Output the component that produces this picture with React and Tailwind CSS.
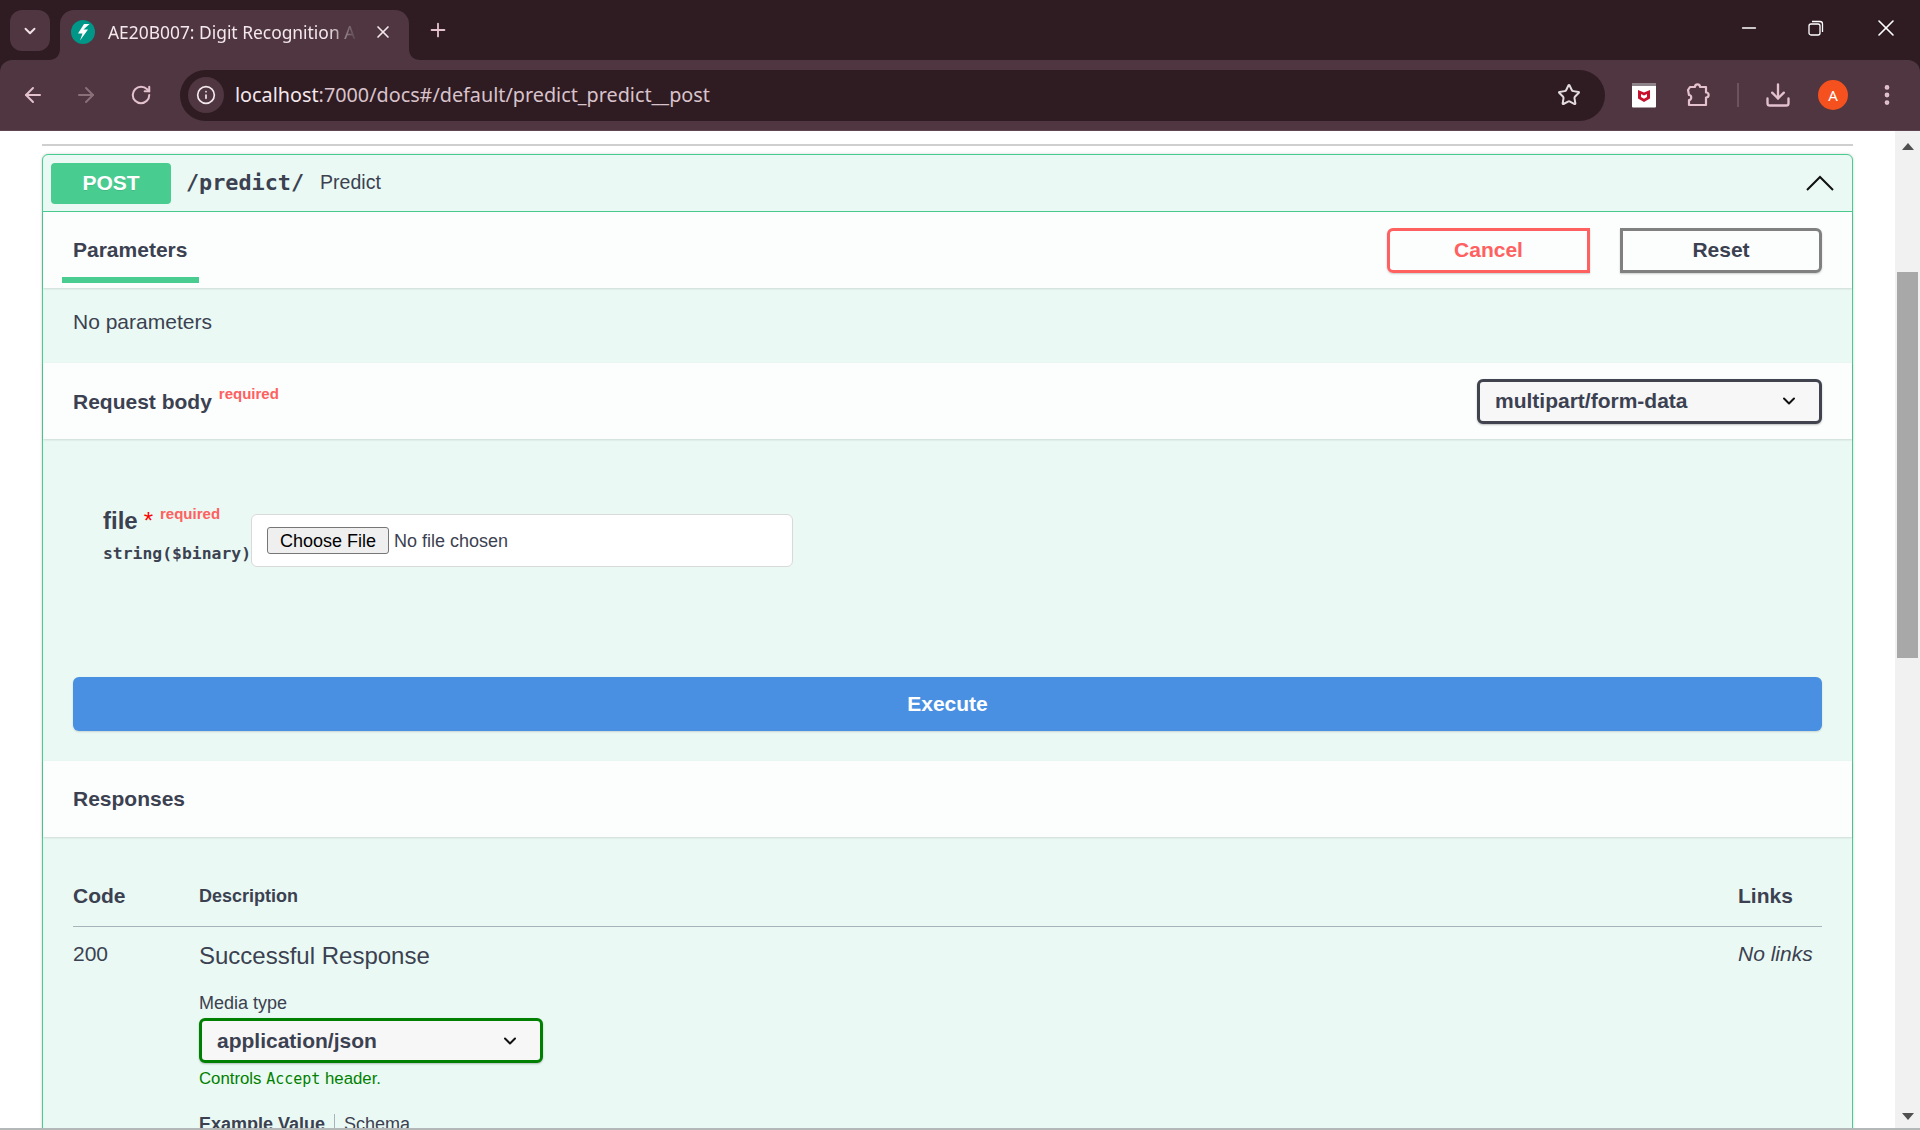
import { ArrowLeft, ArrowRight, ChevronDown, Download, EllipsisVertical, Info, Minus, Plus, RotateCw, Star, X } from 'lucide-react';

const sans = "font-['Liberation_Sans',Arial,sans-serif]";
const mono = "font-['DejaVu_Sans_Mono',monospace]";

function FastApiIcon() {
  return (
    <svg width="24" height="24" viewBox="0 0 24 24">
      <circle cx="12" cy="12" r="12" fill="#009688" />
      <path d="M13 4 L7 13.5 H11.5 L9 20.5 L17 9.5 H12.5 L18.5 4 Z" fill="#fff" />
    </svg>
  );
}

function McAfeeIcon() {
  return (
    <svg width="24" height="25" viewBox="0 0 24 25">
      <rect x="0" y="0" width="24" height="24.5" rx="1" fill="#fff" />
      <rect x="0" y="0" width="24" height="3" fill="#8d8388" />
      <path d="M6 7 L12 9.5 L18 7 V15.5 L12 19 L6 15.5 Z M9 11 V14 L12 15.8 L15 14 V11 L12 12.5 Z" fill="#c8102e" fillRule="evenodd" />
    </svg>
  );
}

function PuzzleIcon() {
  return (
    <svg width="26" height="26" viewBox="0 0 26 26" fill="none" stroke="#e3c1cd" strokeWidth="2.2" strokeLinejoin="round">
      <path d="M5 5 H10 C10 1.5 15 1.5 15 5 H21 V10.5 C24.5 10.5 24.5 15.5 21 15.5 V23 H4 V18 C7 18 7 13 4 13 L3 8 Z" />
    </svg>
  );
}

function RestoreIcon() {
  return (
    <svg width="16" height="16" viewBox="0 0 16 16" fill="none" stroke="#fff" strokeWidth="1.3">
      <rect x="1" y="4" width="11" height="11" rx="2" />
      <path d="M4 1.5 H12 Q14.5 1.5 14.5 4 V12" />
    </svg>
  );
}

function BrowserChrome() {
  return (
    <div className="shrink-0 bg-[#2f1b22] font-['Noto_Sans',sans-serif]">
      <div className="flex h-[60px] items-end pl-[10px]">
        <div className="mb-[9px] flex h-[41px] w-[40px] items-center justify-center self-end rounded-[12px] bg-[#4f3640]">
          <ChevronDown size={18} strokeWidth={2.6} color="#f1dfe5" />
        </div>
        <div className="relative ml-[10px] flex h-[50px] w-[349px] items-center rounded-t-[14px] bg-[#4f3640] pb-[6px] pl-[11px]">
          <svg className="absolute bottom-0 left-[-12px]" width="12" height="12" viewBox="0 0 12 12"><path d="M12 0 V12 H0 Q12 12 12 0 Z" fill="#4f3640" /></svg>
          <svg className="absolute bottom-0 right-[-12px]" width="12" height="12" viewBox="0 0 12 12"><path d="M0 0 V12 H12 Q0 12 0 0 Z" fill="#4f3640" /></svg>
          <FastApiIcon />
          <span className="ml-[13px] w-[250px] overflow-hidden whitespace-nowrap text-[17.4px] text-[#f4e8ec] [mask-image:linear-gradient(to_right,#000_88%,transparent)]">
            AE20B007: Digit Recognition API
          </span>
          <X className="ml-[15px]" size={20} strokeWidth={2} color="#f4e8ec" />
        </div>
        <Plus className="mb-[19px] ml-[18px]" size={22} strokeWidth={2} color="#e3c1cd" />
        <div className="mb-[18px] ml-auto flex items-center pr-[20px]">
          <Minus size={22} strokeWidth={1.5} color="#fff" />
          <div className="ml-[48px]"><RestoreIcon /></div>
          <X className="ml-[48px]" size={28} strokeWidth={1.4} color="#fff" />
        </div>
      </div>
      <div className="flex h-[71px] items-center rounded-t-[12px] border-b border-[#5c4450] bg-[#4f3640] pl-[21px]">
        <ArrowLeft size={24} strokeWidth={2} color="#e3c1cd" />
        <ArrowRight className="ml-[29px]" size={24} strokeWidth={2} color="#8a7078" />
        <RotateCw className="ml-[32px]" size={22} strokeWidth={2.2} color="#e3c1cd" />
        <div className="ml-[28px] flex h-[51px] w-[1425px] items-center rounded-full bg-[#2f1b22] pl-[8px]">
          <div className="flex h-[36px] w-[36px] items-center justify-center rounded-full bg-[#4f3640]">
            <Info size={20} strokeWidth={2} color="#f4e8ec" />
          </div>
          <span className="ml-[11px] text-[19.8px] text-[#f4e8ec]">
            localhost<span className="text-[#d9c3cb]">:7000/docs#/default/predict_predict__post</span>
          </span>
          <Star className="ml-auto mr-[24px]" size={24} strokeWidth={2} color="#e3dcdf" />
        </div>
        <div className="ml-[27px]"><McAfeeIcon /></div>
        <div className="ml-[29px]"><PuzzleIcon /></div>
        <div className="ml-[26px] h-[24px] w-[2px] bg-[#6b5360]" />
        <Download className="ml-[25px]" size={28} strokeWidth={2} color="#e3c1cd" />
        <div className="ml-[26px] flex h-[30px] w-[30px] items-center justify-center rounded-full bg-[#f4511e] text-[15px] text-white">A</div>
        <EllipsisVertical className="ml-[26px]" size={26} strokeWidth={2.4} color="#e3c1cd" />
      </div>
    </div>
  );
}

function Bar({ children }) {
  return (
    <div className="flex h-[76px] items-center justify-between bg-[#fbfefd] pl-[30px] pr-[30px] shadow-[0_1px_2px_rgba(0,0,0,0.12)]">
      {children}
    </div>
  );
}

function MediaSelect({ value, className }) {
  return (
    <div className={`flex h-[45px] items-center justify-between rounded-[6px] border-[3px] bg-[#f7f7f7] pl-[15px] pr-[20px] text-[21px] font-bold text-[#3b4151] shadow-[0_1px_2px_rgba(0,0,0,0.25)] ${className}`}>
      {value}
      <ChevronDown size={20} strokeWidth={2.4} color="#111" />
    </div>
  );
}

function Card() {
  return (
    <div className="mt-[8px] rounded-[6px] border-[1.5px] border-[#49cc90] bg-[#eaf9f3] shadow-[0_0_3px_rgba(0,0,0,0.19)]">
      <div className="flex h-[57px] items-center border-b-[1.5px] border-[#49cc90] pl-[8px] pr-[18px]">
        <div className="flex h-[41px] w-[120px] items-center justify-center rounded-[4px] bg-[#49cc90] text-[21px] font-bold text-white [text-shadow:0_1px_0_rgba(0,0,0,0.1)]">
          POST
        </div>
        <span className={`ml-[15px] text-[21.8px] font-bold text-[#3b4151] ${mono}`}>/predict/</span>
        <span className="ml-[16px] text-[19.5px] text-[#3b4151]">Predict</span>
        <svg className="ml-auto" width="28" height="16" viewBox="0 0 28 16" fill="none" stroke="#111" strokeWidth="2">
          <path d="M1 15 L14 2 L27 15" />
        </svg>
      </div>

      <Bar>
        <div className="relative flex h-full items-center text-[21px] font-bold text-[#3b4151]">
          Parameters
          <div className="absolute bottom-[5px] left-[-11px] right-[-12px] h-[6px] bg-[#49cc90]" />
        </div>
        <div className="flex items-center gap-[30px]">
          <div className="flex h-[45px] w-[203px] items-center justify-center rounded-l-[6px] border-[3px] border-[#ff6060] text-[21px] font-bold text-[#ff6060] shadow-[0_1px_2px_rgba(0,0,0,0.2)]">
            Cancel
          </div>
          <div className="flex h-[45px] w-[202px] items-center justify-center rounded-r-[6px] border-[3px] border-[#808080] text-[21px] font-bold text-[#3b4151] shadow-[0_1px_2px_rgba(0,0,0,0.2)]">
            Reset
          </div>
        </div>
      </Bar>

      <div className="h-[75px] pl-[30px] pt-[20px] text-[21px] leading-[27px] text-[#3b4151]">No parameters</div>

      <Bar>
        <div className="flex items-start pt-[1px] text-[21px] font-bold text-[#3b4151]">
          Request body
          <span className="ml-[7px] mt-[-3px] text-[15px] font-bold text-[#ff6060]">required</span>
        </div>
        <MediaSelect value="multipart/form-data" className="w-[345px] border-[#41444e]" />
      </Bar>

      <div className="flex pl-[60px] pt-[75px]">
        <div className="mt-[-8px] w-[148px] shrink-0">
          <div className="flex items-start text-[24px] font-bold leading-[30px] text-[#3b4151]">
            file
            <span className="ml-[6px] text-[24px] font-normal leading-[30px] text-[#ff0000]">*</span>
            <span className="ml-[7px] mt-[-4px] text-[15px] font-bold leading-[24px] text-[#ff6060]">required</span>
          </div>
          <div className={`mt-[6px] whitespace-nowrap text-[16.4px] font-bold leading-[24px] text-[#3b4151] ${mono}`}>string($binary)</div>
        </div>
        <div className="flex h-[53px] w-[542px] items-center rounded-[6px] border-[1.5px] border-[#d9d9d9] bg-white pl-[15px]">
          <input type="file" className="w-[500px] text-[18px] text-[#3b4151] file:mr-[5px] file:h-[27px] file:rounded-[3px] file:border file:border-solid file:border-[#767676] file:bg-[#efefef] file:px-[12px] file:text-[18px] file:text-black" />
        </div>
      </div>

      <div className="mx-[30px] mt-[110px] flex h-[54px] items-center justify-center rounded-[6px] bg-[#4a90e2] text-[21px] font-bold text-white shadow-[0_1px_2px_rgba(0,0,0,0.15)]">
        Execute
      </div>

      <div className="mt-[30px] flex h-[76px] items-center bg-[#fbfefd] pl-[30px] text-[21px] font-bold text-[#3b4151] shadow-[0_1px_2px_rgba(0,0,0,0.12)]">
        Responses
      </div>

      <div className="px-[30px] pt-[42px] text-[#3b4151]">
        <div className="flex h-[48px] items-start border-b-[1.5px] border-[#a8b3ba] pt-[2px]">
          <div className="w-[126px] text-[21px] font-bold leading-[30px]">Code</div>
          <div className="text-[18px] font-bold leading-[30px]">Description</div>
          <div className="ml-auto w-[84px] text-[21px] font-bold leading-[30px]">Links</div>
        </div>
        <div className="flex pt-[13px]">
          <div className="w-[126px] text-[21px] leading-[28px]">200</div>
          <div className="flex-1">
            <div className="text-[24px] leading-[32px]">Successful Response</div>
            <div className="mt-[19px] text-[18px] leading-[24px]">Media type</div>
            <MediaSelect value="application/json" className="mt-[3px] w-[344px] border-[#008000]" />
            <div className="mt-[5px] text-[16.8px] leading-[22px] text-[#008000]">
              Controls <code className={`text-[15px] ${mono}`}>Accept</code> header.
            </div>
            <div className="mt-[21px] flex h-[26px] items-center text-[18px] leading-[24px]">
              <span className="font-bold">Example Value</span>
              <div className="mx-[9px] h-[20px] w-px bg-[#a8b3ba]" />
              <span>Schema</span>
            </div>
          </div>
          <div className="w-[84px] text-[21px] italic leading-[28px]">No links</div>
        </div>
      </div>
    </div>
  );
}

export default function App() {
  return (
    <div className={`flex h-[1130px] flex-col overflow-hidden bg-white ${sans}`}>
      <BrowserChrome />
      <div className="flex min-h-0 flex-1">
        <div className="min-w-0 flex-1 overflow-hidden pl-[42px] pr-[42px] pt-[13px]">
          <div className="h-[2px] bg-[#cfcfcf]" />
          <Card />
        </div>
        <div className="flex w-[25px] shrink-0 flex-col items-center bg-[#f1f1f1] text-[#505050]">
          <svg className="mt-[12px]" width="12" height="7" viewBox="0 0 12 7"><path d="M6 0 L12 7 H0 Z" fill="#505050" /></svg>
          <div className="mt-[122px] h-[386px] w-[21px] bg-[#a8a8a8]" />
          <svg className="mb-[8px] mt-auto" width="12" height="7" viewBox="0 0 12 7"><path d="M6 7 L12 0 H0 Z" fill="#505050" /></svg>
        </div>
      </div>
      <div className="h-[2px] shrink-0 bg-[#b4b8b9]" />
    </div>
  );
}
